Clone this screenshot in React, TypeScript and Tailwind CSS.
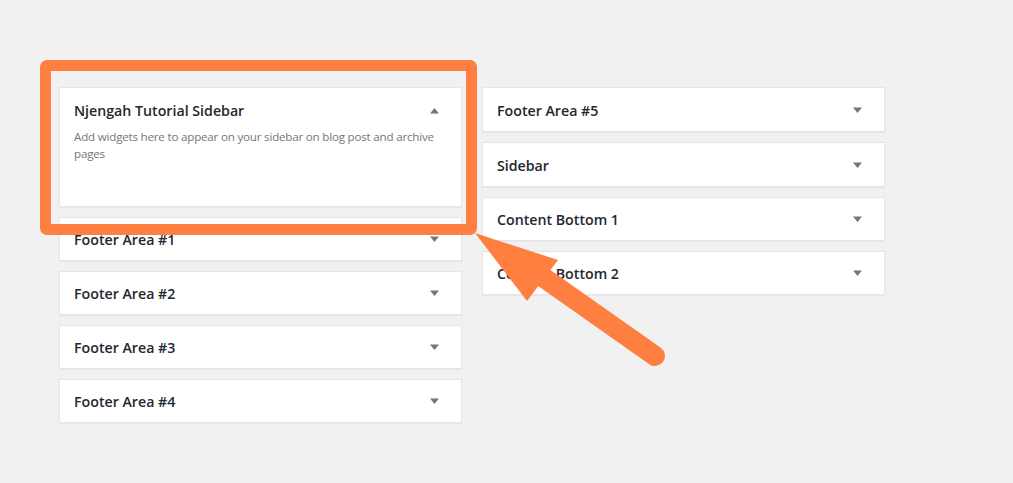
import React from "react";

const Caret = ({ up = false }: { up?: boolean }) => (
  <svg width="9" height="6" viewBox="0 0 9 6" className="shrink-0">
    {up ? <polygon points="0,5.5 9,5.5 4.5,0" fill="#72777c" /> : <polygon points="0,0.5 9,0.5 4.5,6" fill="#72777c" />}
  </svg>
);

const Card = ({ title, h = "h-[45px]" }: { title: string; h?: string }) => (
  <div className={`${h} bg-white border border-[#e5e5e5] shadow-[0_1px_1px_rgba(0,0,0,0.04)] flex items-center justify-between pl-[14px] pr-[22px]`}>
    <span className="text-[14.2px] font-semibold text-[#23282d] leading-none pt-[3px]">{title}</span>
    <Caret />
  </div>
);

export default function App() {
  return (
    <div
      className="relative w-[1013px] h-[483px] bg-[#f1f1f1] overflow-hidden"
      style={{ fontFamily: '"Open Sans", "Noto Sans", sans-serif' }}
    >
      <div className="flex gap-[20px] pl-[59px] pt-[87px]">
        <div className="w-[403px] flex flex-col gap-[10px]">
          <div className="h-[120px] bg-white border border-[#e5e5e5] shadow-[0_1px_1px_rgba(0,0,0,0.04)] pl-[14px] pr-[22px] pt-[14px]">
            <div className="flex items-center justify-between">
              <span className="text-[14.2px] font-semibold text-[#23282d] leading-[18px]">Njengah Tutorial Sidebar</span>
              <Caret up />
            </div>
            <p className="mt-[8px] mr-[-12px] text-[11.6px] tracking-[-0.2px] leading-[17px] text-[#72777c]">
              Add widgets here to appear on your sidebar on blog post and archive pages
            </p>
          </div>
          <Card title="Footer Area #1" h="h-[44px]" />
          <Card title="Footer Area #2" h="h-[44px]" />
          <Card title="Footer Area #3" h="h-[44px]" />
          <Card title="Footer Area #4" h="h-[44px]" />
        </div>
        <div className="w-[403px] flex flex-col gap-[10px]">
          <Card title="Footer Area #5" />
          <Card title="Sidebar" />
          <Card title="Content Bottom 1" h="h-[44px]" />
          <Card title="Content Bottom 2" h="h-[44px]" />
        </div>
      </div>

      <div className="absolute left-[40px] top-[60px] w-[437px] h-[175px] border-[11px] border-[#fe7f40] rounded-[7px] pointer-events-none" />

      <svg className="absolute left-0 top-0 pointer-events-none" width="1013" height="483">
        <line x1="540" y1="275" x2="655" y2="356" stroke="#fe7f40" strokeWidth="20" strokeLinecap="round" />
        <polygon points="475,233 558,260 527,301" fill="#fe7f40" />
      </svg>
    </div>
  );
}
